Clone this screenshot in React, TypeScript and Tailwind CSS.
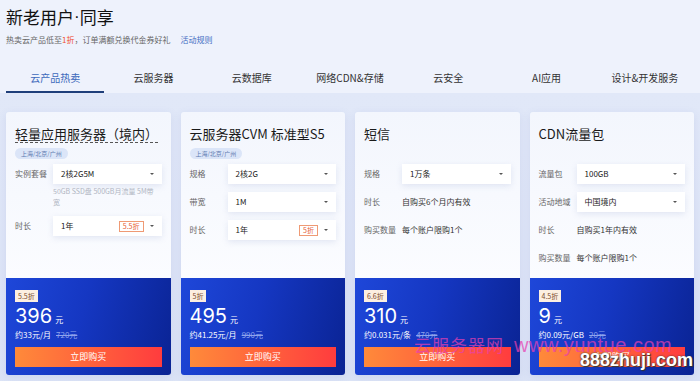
import React from 'react';

const FONT = '"Noto Sans CJK SC", "Noto Sans", sans-serif';

const tabs = ['云产品热卖', '云服务器', '云数据库', '网络CDN&存储', '云安全', 'AI应用', '设计&开发服务'];

type Row =
  | { kind: 'select'; label: string; value: string; off?: string; note?: string }
  | { kind: 'text'; label: string; value: string };

type Card = {
  title: string;
  dotted?: boolean;
  tag?: string;
  rows: Row[];
  discount: string;
  price: string;
  unit: string;
  old: string;
};

const cards: Card[] = [
  {
    title: '轻量应用服务器（境内）',
    dotted: true,
    tag: '上海/北京/广州',
    rows: [
      { kind: 'select', label: '实例套餐', value: '2核2G5M', note: '50GB SSD盘 500GB月流量 5M带宽' },
      { kind: 'select', label: '时长', value: '1年', off: '5.5折' },
    ],
    discount: '5.5折',
    price: '396',
    unit: '约33元/月',
    old: '720元',
  },
  {
    title: '云服务器CVM 标准型S5',
    tag: '上海/北京/广州',
    rows: [
      { kind: 'select', label: '规格', value: '2核2G' },
      { kind: 'select', label: '带宽', value: '1M' },
      { kind: 'select', label: '时长', value: '1年', off: '5折' },
    ],
    discount: '5折',
    price: '495',
    unit: '约41.25元/月',
    old: '990元',
  },
  {
    title: '短信',
    rows: [
      { kind: 'select', label: '规格', value: '1万条' },
      { kind: 'text', label: '时长', value: '自购买6个月内有效' },
      { kind: 'text', label: '购买数量', value: '每个账户限购1个' },
    ],
    discount: '6.6折',
    price: '310',
    unit: '约0.031元/条',
    old: '470元',
  },
  {
    title: 'CDN流量包',
    rows: [
      { kind: 'select', label: '流量包', value: '100GB' },
      { kind: 'select', label: '活动地域', value: '中国境内' },
      { kind: 'text', label: '时长', value: '自购买1年内有效' },
      { kind: 'text', label: '购买数量', value: '每个账户限购1个' },
    ],
    discount: '4.5折',
    price: '9',
    unit: '约0.09元/GB',
    old: '20元',
  },
];

const Caret = () => (
  <svg width="6" height="4" viewBox="0 0 6 4" className="ml-[5px] shrink-0">
    <path d="M1 1 L3 3 L5 1 Z" fill="#555" />
  </svg>
);

function RowView({ row }: { row: Row }) {
  return (
    <div className="flex items-start">
      <div className="w-[38px] shrink-0 h-[20px] flex items-center text-[8px] text-[#666] whitespace-nowrap">{row.label}</div>
      {row.kind === 'select' ? (
        <div className="flex-1">
          <div className="h-[20px] bg-white shadow-[0_2px_6px_rgba(120,140,190,0.18)] flex items-center pl-[8px] pr-[7px] text-[8px] text-[#222]">
            <span className="flex-1">{row.value}</span>
            {row.off && (
              <span className="border border-[#ef9a74] text-[#e65b33] text-[7px] leading-[9px] px-[3px]">{row.off}</span>
            )}
            <Caret />
          </div>
          {row.note && <div className="mt-[2px] text-[7px] leading-[11px] text-[#b0b5c2] pr-[6px]">{row.note}</div>}
        </div>
      ) : (
        <div className="h-[20px] flex items-center text-[8px] text-[#333]">{row.value}</div>
      )}
    </div>
  );
}

function CardView({ card }: { card: Card }) {
  return (
    <div className="h-[263px] flex flex-col rounded-[3px] overflow-hidden shadow-[0_2px_8px_rgba(90,110,180,0.12)]">
      <div className="flex-1 bg-[linear-gradient(180deg,#f3f6fd,#fbfcff)] px-[9px] pt-[8px]">
        <div className="h-[44px]">
          <div
            className={`inline-block text-[13px] leading-[16px] text-[#1a1a1a] ${card.dotted ? 'border-b border-dashed border-[#555]' : ''}`}
          >
            {card.title}
          </div>
          {card.tag && (
            <div className="mt-[4px] w-fit rounded-full bg-[#dbe5f8] px-[6px] h-[11px] flex items-center text-[6px] text-[#5d7ab0]">
              {card.tag}
            </div>
          )}
        </div>
        <div className="flex flex-col gap-[8px]">
          {card.rows.map((r, i) => (
            <RowView key={i} row={r} />
          ))}
        </div>
      </div>
      <div className="h-[97px] bg-[linear-gradient(105deg,#1e47d9_0%,#1537c2_45%,#0a2393_100%)] px-[9px] pt-[12px]">
        <div className="w-fit h-[12px] bg-[#fcefe1] px-[3px] flex items-center text-[7px] text-[#7b4b2c]">{card.discount}</div>
        <div className="mt-[3px] flex items-baseline text-white">
          <span className="text-[20px] leading-[22px] font-['Inter']">{card.price}</span>
          <span className="ml-[3px] text-[8px]">元</span>
        </div>
        <div className="mt-[2px] flex items-center text-[8px] leading-[11px] text-white">
          <span>{card.unit}</span>
          <span className="ml-[5px] line-through text-[#8ea3ec]">{card.old}</span>
        </div>
        <div className="mt-[7px] h-[20px] bg-[linear-gradient(90deg,#ff8a3a,#ff3c3e)] flex items-center justify-center text-[9px] text-white">
          立即购买
        </div>
      </div>
    </div>
  );
}

export default function App() {
  return (
    <div className="relative w-[700px] h-[381px] overflow-hidden bg-[#eef2fc]" style={{ fontFamily: FONT }}>
      <div className="px-[6px] pt-[4px]">
        <div className="h-[26px] flex items-center text-[17px] leading-[20px] text-[#111]">
          新老用户<span className="font-['Liberation_Sans'] leading-[20px]">·</span>同享
        </div>
        <div className="mt-[4px] text-[8px] leading-[12px] text-[#666]">
          热卖云产品低至<span className="text-[#f0512f]">1折</span>，订单满额兑换代金券好礼
          <span className="ml-[10px] text-[#3f6dc2]">活动规则</span>
        </div>
      </div>
      <div className="mt-[18px] px-[6px] grid grid-cols-7 h-[29px]">
        {tabs.map((t, i) => (
          <div key={t} className="flex flex-col items-center">
            <div className={`pt-[8px] text-[10px] leading-[12px] ${i === 0 ? 'text-[#3c69bb]' : 'text-[#333]'}`}>{t}</div>
            <div className="flex-1" />
            <div className={`h-[2px] w-full ${i === 0 ? 'bg-[#1f3f7a]' : ''}`} />
          </div>
        ))}
      </div>
      <div className="bg-[linear-gradient(180deg,#e1e8f8,#dbe3f6)] px-[6px] pt-[19px] h-[300px]">
        <div className="grid grid-cols-4 gap-[10px]">
          {cards.map((c) => (
            <CardView key={c.title} card={c} />
          ))}
        </div>
      </div>
      <div className="absolute left-[414px] top-[333px] flex items-center gap-[10px] leading-[24px] text-[rgba(232,64,176,0.72)] pointer-events-none whitespace-nowrap">
        <span className="text-[17px] tracking-[1px]">云服务器网</span>
        <span className="text-[20px] tracking-[0.5px] font-['Liberation_Sans']">www.yuntue.com</span>
      </div>
      <div className="absolute left-[580px] top-[348px] text-[18px] leading-[24px] font-bold text-white pointer-events-none font-['Liberation_Sans'] [text-shadow:0_0_2px_#333,1px_1px_1px_#333]">
        888zhuji.com
      </div>
    </div>
  );
}
